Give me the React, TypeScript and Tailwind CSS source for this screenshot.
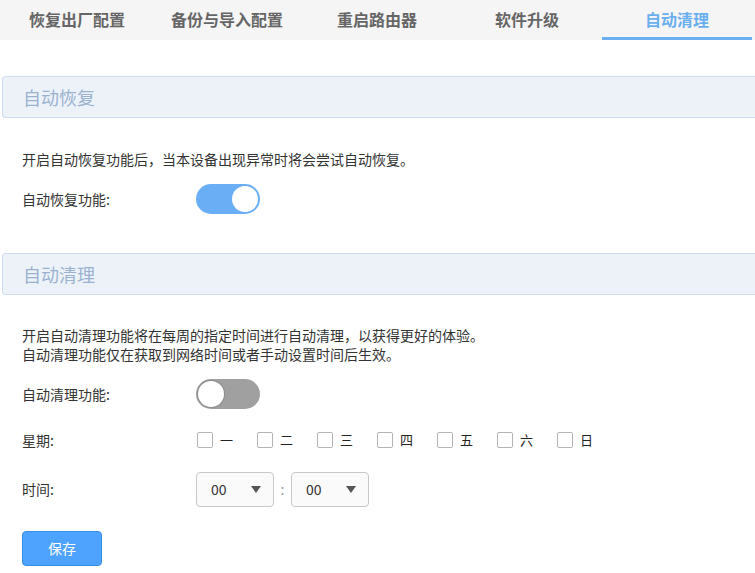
import { useState } from "react";

const tabs = ["恢复出厂配置", "备份与导入配置", "重启路由器", "软件升级", "自动清理"];
const days = ["一", "二", "三", "四", "五", "六", "日"];

const Toggle = ({ on, onClick }: { on: boolean; onClick: () => void }) => (
  <button
    onClick={onClick}
    className={`w-[64px] h-[30px] rounded-full p-[2px] flex ${
      on ? "bg-[#6aaff5] justify-end" : "bg-[#a0a0a0] justify-start"
    }`}
  >
    <span
      className={`block w-[26px] h-[26px] rounded-full bg-white ${
        on ? "" : "shadow-[0_0_0_1px_#8c8c8c]"
      }`}
    />
  </button>
);

const SectionHeader = ({ title }: { title: string }) => (
  <div className="ml-[2px] w-[800px] h-[42px] bg-[#edf2f9] border border-r-0 border-[#cfdcef] rounded-l-[4px] flex items-center pl-[20px]">
    <span className="text-[18px] text-[#9ab2cf]">{title}</span>
  </div>
);

const Select = () => (
  <div className="w-[78px] h-[35px] border border-[#c8c8c8] rounded-[4px] bg-[#fafafa] flex items-center justify-between pl-[14px] pr-[12px]">
    <span className="text-[14px] text-[#333]">00</span>
    <svg width="10" height="7" viewBox="0 0 10 7">
      <path d="M0 0 H10 L5 7 Z" fill="#555" />
    </svg>
  </div>
);

export default function App() {
  const [recover, setRecover] = useState(true);
  const [clean, setClean] = useState(false);
  const [checked, setChecked] = useState<boolean[]>(days.map(() => false));

  return (
    <div
      className="w-full min-h-[573px] bg-white overflow-hidden text-[14px] text-[#333]"
      style={{ fontFamily: '"Noto Sans CJK SC", "Liberation Sans", sans-serif' }}
    >
      <div className="w-full h-[40px] bg-[#f5f5f5] flex pl-[2px]">
        {tabs.map((t, i) => (
          <div
            key={t}
            className={`w-[150px] shrink-0 h-full flex items-center justify-center text-[16px] font-bold border-b-[3px] ${
              i === 4 ? "text-[#6aaff0] border-[#6aaff0]" : "text-[#666] border-transparent"
            }`}
          >
            {t}
          </div>
        ))}
      </div>

      <div className="pt-[36px]">
        <SectionHeader title="自动恢复" />
        <div className="pl-[22px] pt-[31px]">
          <p className="leading-[20px]">开启自动恢复功能后，当本设备出现异常时将会尝试自动恢复。</p>
          <div className="flex items-center mt-[15px] h-[30px]">
            <span className="w-[174px]">自动恢复功能:</span>
            <Toggle on={recover} onClick={() => setRecover(!recover)} />
          </div>
        </div>
      </div>

      <div className="pt-[39px]">
        <SectionHeader title="自动清理" />
        <div className="pl-[22px] pt-[31px]">
          <p className="leading-[19px]">
            开启自动清理功能将在每周的指定时间进行自动清理，以获得更好的体验。
            <br />
            自动清理功能仅在获取到网络时间或者手动设置时间后生效。
          </p>
          <div className="flex items-center mt-[15px] h-[30px]">
            <span className="w-[174px]">自动清理功能:</span>
            <Toggle on={clean} onClick={() => setClean(!clean)} />
          </div>
          <div className="flex items-center mt-[16px] h-[30px]">
            <span className="w-[175px]">星期:</span>
            {days.map((d, i) => (
              <label key={d} className="w-[60px] flex items-center gap-[7px] cursor-pointer">
                <span
                  onClick={() => setChecked(checked.map((c, j) => (j === i ? !c : c)))}
                  className={`w-[16px] h-[16px] border rounded-[2px] ${
                    checked[i] ? "bg-[#4da3ff] border-[#4da3ff]" : "border-[#b4b4b4] bg-white"
                  }`}
                />
                <span className="text-[13px] text-[#222]">{d}</span>
              </label>
            ))}
          </div>
          <div className="flex items-center mt-[17px] h-[35px]">
            <span className="w-[174px]">时间:</span>
            <Select />
            <span className="w-[17px] text-center text-[#999]">:</span>
            <Select />
          </div>
          <button className="mt-[24px] w-[80px] h-[35px] rounded-[4px] bg-[#4da3ff] border border-[#3a8ee6] text-white text-[14px]">
            保存
          </button>
        </div>
      </div>
    </div>
  );
}
